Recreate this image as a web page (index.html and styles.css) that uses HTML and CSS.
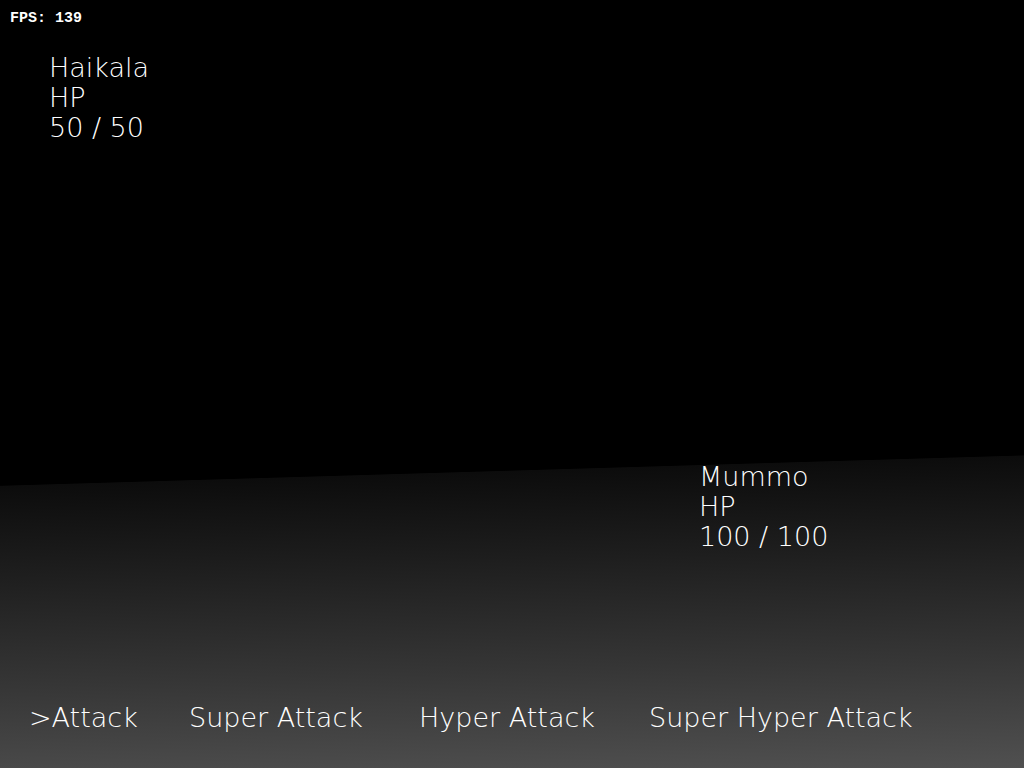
FILE: index.html
```html
<!DOCTYPE html>
<html>
<head>
<meta charset="utf-8">
<link rel="stylesheet" href="styles.css">
</head>
<body>
<div class="screen">
  <div class="fps">FPS: 139</div>
  <div class="stats player">
    <div class="line">Haikala</div>
    <div class="line">HP</div>
    <div class="line">50 / 50</div>
  </div>
  <div class="stats enemy">
    <div class="line">Mummo</div>
    <div class="line">HP</div>
    <div class="line">100 / 100</div>
  </div>
  <div class="menu">
    <div class="item item1">&gt;Attack</div>
    <div class="item item2">Super Attack</div>
    <div class="item item3">Hyper Attack</div>
    <div class="item item4">Super Hyper Attack</div>
  </div>
</div>
</body>
</html>
```
FILE: styles.css
```css
html, body {
  margin: 0;
  padding: 0;
}
body {
  background: #000;
}
.screen {
  position: relative;
  width: 1024px;
  height: 768px;
  overflow: hidden;
  display: flex;
  flex-direction: column;
  background: linear-gradient(178.3deg, #000 0%, #000 60.8%, #0c0c0c 60.9%, #1e1e1e 72%, #363636 86%, #505050 100%);
  color: #fff;
  font-family: "DejaVu Sans", sans-serif;
  font-weight: 200;
  font-size: 27px;
}
.fps {
  position: absolute;
  left: 10px;
  top: 10px;
  font-family: "Liberation Mono", monospace;
  font-weight: bold;
  font-size: 15px;
  line-height: 17px;
}
.line {
  line-height: 30px;
  height: 30px;
  white-space: nowrap;
}
.player {
  margin-top: 53px;
  padding-left: 49px;
}
.enemy {
  margin-top: 319px;
  padding-left: 699px;
}
.menu {
  margin-top: 151px;
  display: flex;
  line-height: 30px;
  white-space: nowrap;
}
.item1 { margin-left: 29px; width: 160px; }
.item2 { width: 230px; }
.item3 { width: 230px; }
```
